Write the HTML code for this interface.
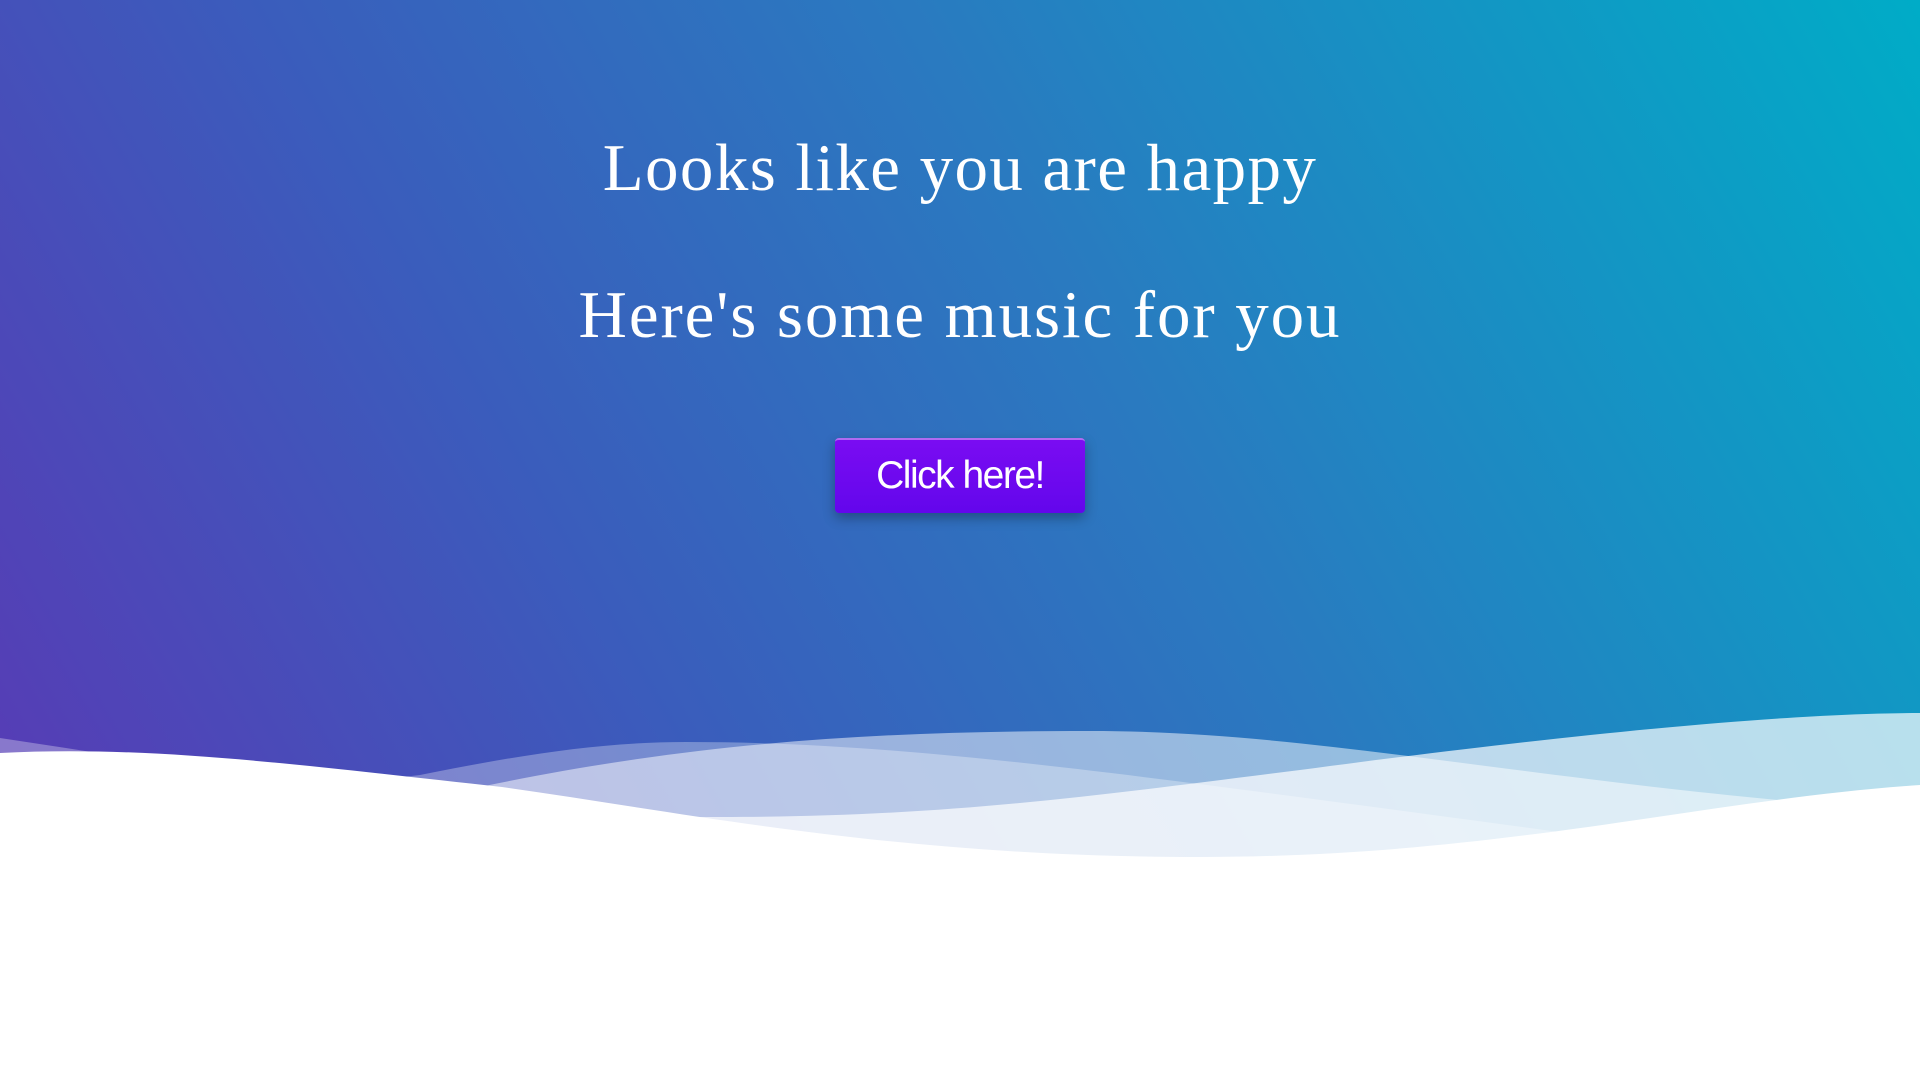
<!DOCTYPE html>
<html><head><meta charset="utf-8"><style>
html,body{margin:0;padding:0;width:1920px;height:1080px;overflow:hidden;}
body{background:linear-gradient(60deg,#5d35b4 0%,#3a5dbc 35%,#2a7ac0 60%,#00acc7 100%);position:relative;font-family:"Liberation Serif",serif;}
h1{position:absolute;left:0;width:1920px;margin:0;text-align:center;color:#fff;font-weight:normal;font-size:67px;letter-spacing:1.4px;line-height:1;}
#h1a{top:135px;}
#h2a{top:282px;letter-spacing:1.9px;}
.btn{position:absolute;left:835px;top:438px;width:250px;height:75px;box-sizing:border-box;border-radius:4px;border-top:2px solid #b06af2;background:linear-gradient(#7a0cf2,#6306ec);box-shadow:0 5px 12px rgba(0,0,0,.3);color:#fff;font-family:"Liberation Sans",sans-serif;font-size:39px;letter-spacing:-1.5px;text-align:center;line-height:72px;}
svg{position:absolute;left:0;top:0;}
</style></head><body>
<svg width="1920" height="1080" viewBox="0 0 1920 1080">
<path d="M0,738 C150,760 300,790 420,775 C520,755 600,742 686,742 C900,742 1100,770 1567,833 L1920,880 V1080 H0 Z" fill="#fff" fill-opacity="0.3"/>
<path d="M400,805 C650,745 850,731 1090,731 C1300,731 1500,775 1800,802 L1920,820 V1080 H400 Z" fill="#fff" fill-opacity="0.5"/>
<path d="M450,790 C580,815 650,817 722,817 C950,817 1100,795 1300,770 C1600,730 1800,713 1920,713 V1080 H450 Z" fill="#fff" fill-opacity="0.7"/>
<path d="M0,753 C150,745 300,765 502,787 C700,815 900,857 1200,857 C1500,857 1700,800 1920,785 V1080 H0 Z" fill="#fff"/>
</svg>
<h1 id="h1a">Looks like you are happy</h1>
<h1 id="h2a">Here's some music for you</h1>
<div class="btn">Click here!</div>
</body></html>
